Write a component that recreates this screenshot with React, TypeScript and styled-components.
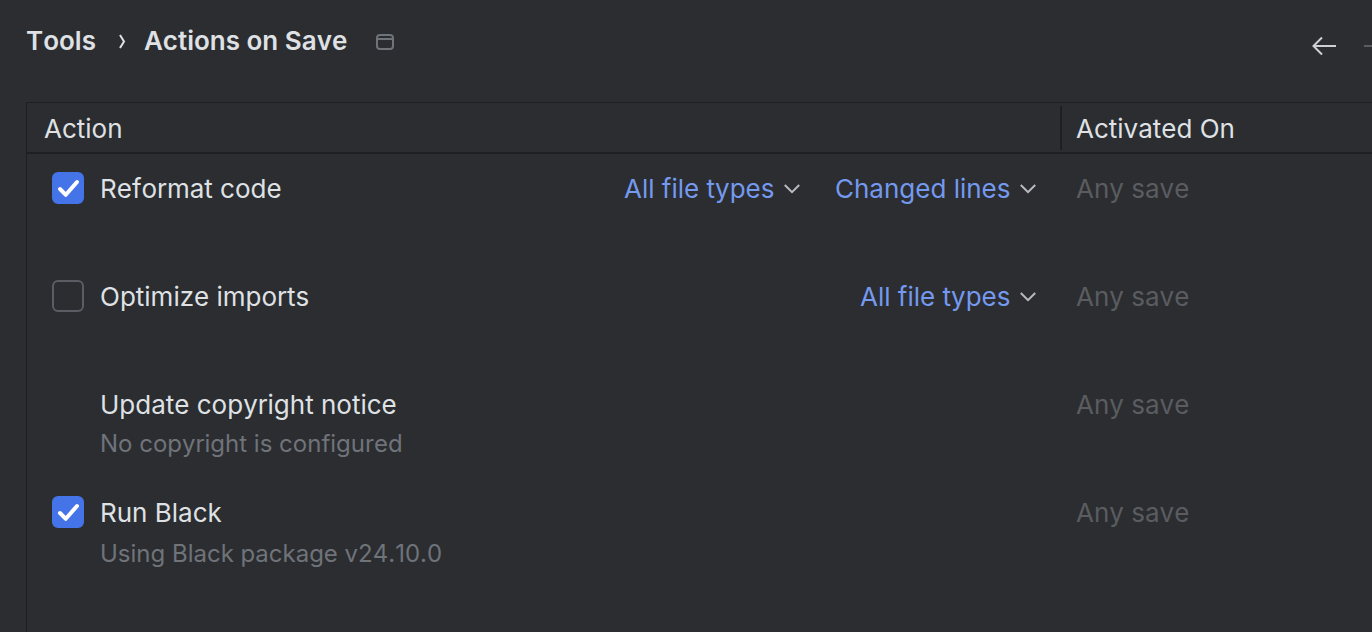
import React, { useState } from "react";
import styled, { createGlobalStyle } from "styled-components";

const color = {
  background: "#2b2d30",
  line: "#1e1f22",
  text: "#dfe1e5",
  muted: "#6f737a",
  disabled: "#5a5c60",
  link: "#7499ee",
  accent: "#4573e8",
};

const GlobalStyle = createGlobalStyle`
  *, *::before, *::after { box-sizing: border-box; }
  body {
    margin: 0;
    overflow-x: hidden;
    background: ${color.background};
    color: ${color.text};
    font: 400 26px/34px Inter, sans-serif;
    font-kerning: none;
  }
`;

const Page = styled.main`
  display: flex;
  flex-direction: column;
  min-height: 100vh;
  padding-left: 26px;
`;

const Header = styled.header`
  display: flex;
  align-items: flex-start;
  justify-content: space-between;
  padding: 24px 0 44px;
`;

const Breadcrumb = styled.nav`
  display: flex;
  align-items: center;
  height: 34px;
  font-weight: 600;
`;

const Crumb = styled.a`
  color: inherit;
  text-decoration: none;
`;

const Title = styled.h1`
  margin: 0;
  font: inherit;
`;

const Separator = styled.svg`
  width: 8px;
  height: 16px;
  margin: 0 18px 0 22px;
`;

const IconButton = styled.button<{ $dim?: boolean }>`
  display: flex;
  padding: 0;
  border: 0;
  background: none;
  color: ${(p) => (p.$dim ? color.disabled : "#ced0d6")};
`;

const ScopeIcon = styled.svg`
  width: 20px;
  height: 18px;
  margin: 2px 0 0 28px;
  color: ${color.muted};
`;

const History = styled.div`
  display: flex;
  gap: 28px;
  margin: 10px -16px 0 0;
`;

const Panel = styled.section`
  flex: 1;
  border-top: 1px solid ${color.line};
  border-left: 1px solid ${color.line};
`;

const Table = styled.table`
  width: 100%;
  table-layout: fixed;
  border-collapse: separate;
  border-spacing: 0;
`;

const ActionHead = styled.th`
  height: 51px;
  padding: 3px 0 0 17px;
  border-bottom: 2px solid ${color.line};
  font-weight: 400;
  text-align: left;
`;

const ActivationHead = styled(ActionHead)`
  width: 312px;
  padding: 3px 0 2px;
`;

const HeadDivider = styled.div`
  padding: 6px 0 4px 14px;
  border-left: 2px solid ${color.line};
`;

const Cell = styled.td`
  height: 108px;
  padding: 18px 0 0 25px;
  vertical-align: top;
`;

const ActivationCell = styled(Cell)`
  padding-left: 16px;
  color: ${color.disabled};
`;

const Row = styled.div`
  display: flex;
  align-items: flex-start;
  justify-content: space-between;
  padding-right: 24px;
`;

const Label = styled.label`
  display: flex;
  gap: 16px;
`;

const Indented = styled.div`
  padding-left: 48px;
`;

const Note = styled.div<{ $spaced?: boolean }>`
  padding: ${(p) => (p.$spaced ? "8px" : "6px")} 0 0 48px;
  color: ${color.muted};
  font-size: 24px;
  line-height: 32px;
`;

const Tick = styled.span`
  display: grid;
  width: 32px;
  height: 32px;

  > * { grid-area: 1 / 1; }
  input:not(:checked) + svg { visibility: hidden; }
`;

const Box = styled.input`
  width: 32px;
  height: 32px;
  margin: 0;
  appearance: none;
  border: 2px solid #5a5d63;
  border-radius: 6px;

  &:checked {
    border-color: ${color.accent};
    background: ${color.accent};
  }
`;

const Overlay = styled.svg`
  pointer-events: none;
`;

const Options = styled.div`
  display: flex;
  gap: 35px;
`;

const Dropdown = styled.span`
  display: grid;
  align-items: center;

  > * { grid-area: 1 / 1; }
  > svg { justify-self: end; }
`;

const Select = styled.select`
  height: 34px;
  padding: 0 25px 0 0;
  appearance: none;
  border: 0;
  background: none;
  color: ${color.link};
  font: inherit;
`;

function Checkbox({ label, initial }: { label: string; initial: boolean }) {
  const [checked, setChecked] = useState(initial);
  return (
    <Label>
      <Tick>
        <Box type="checkbox" checked={checked} onChange={(e) => setChecked(e.target.checked)} />
        <Overlay width="32" height="32" viewBox="0 0 32 32" fill="none">
          <path d="M8 17L13.8 22.8L25 10" stroke="#fff" strokeWidth="4" strokeLinecap="round" strokeLinejoin="round" />
        </Overlay>
      </Tick>
      {label}
    </Label>
  );
}

function Picker({ label, value }: { label: string; value: string }) {
  return (
    <Dropdown>
      <Select aria-label={label} defaultValue={value}>
        <option>{value}</option>
      </Select>
      <Overlay width="16" height="10" viewBox="0 0 16 10" fill="none">
        <path d="M0.8 1L8 8.2L15.2 1" stroke="#b9bbc1" strokeWidth="2" />
      </Overlay>
    </Dropdown>
  );
}

type Action = {
  name: string;
  checked?: boolean;
  note?: string;
  pickers: { label: string; value: string }[];
};

const fileTypes = { label: "File types", value: "All file types" };

const actions: Action[] = [
  {
    name: "Reformat code",
    checked: true,
    pickers: [fileTypes, { label: "Scope", value: "Changed lines" }],
  },
  { name: "Optimize imports", checked: false, pickers: [fileTypes] },
  { name: "Update copyright notice", note: "No copyright is configured", pickers: [] },
  { name: "Run Black", checked: true, note: "Using Black package v24.10.0", pickers: [] },
];

export default function App() {
  return (
    <>
      <GlobalStyle />
      <Page>
        <Header>
          <Breadcrumb aria-label="Breadcrumb">
            <Crumb href="#tools">Tools</Crumb>
            <Separator viewBox="0 0 8 16" fill="none" aria-hidden>
              <path d="M2 2L6 8.5L2 15" stroke={color.text} strokeWidth="2" />
            </Separator>
            <Title>Actions on Save</Title>
            <ScopeIcon viewBox="0 0 20 18" fill="none" stroke="currentColor" strokeWidth="2" aria-hidden>
              <rect x="2" y="2" width="16" height="14" rx="3" />
              <path d="M2 6H18" />
            </ScopeIcon>
          </Breadcrumb>
          <History>
            <IconButton aria-label="Back">
              <svg width="24" height="24" viewBox="0 0 24 24" fill="none" stroke="currentColor" strokeWidth="2">
                <path d="M24 12H1.5M10 3.5L1.5 12L10 20.5" />
              </svg>
            </IconButton>
            <IconButton aria-label="Forward" $dim disabled>
              <svg width="24" height="24" viewBox="0 0 24 24" fill="none" stroke="currentColor" strokeWidth="2">
                <path d="M0 12H22.5M14 3.5L22.5 12L14 20.5" />
              </svg>
            </IconButton>
          </History>
        </Header>
        <Panel>
          <Table>
            <thead>
              <tr>
                <ActionHead scope="col">Action</ActionHead>
                <ActivationHead scope="col">
                  <HeadDivider>Activated On</HeadDivider>
                </ActivationHead>
              </tr>
            </thead>
            <tbody>
              {actions.map((action) => {
                const hasBox = action.checked !== undefined;
                return (
                  <tr key={action.name}>
                    <Cell>
                      <Row>
                        {hasBox ? (
                          <Checkbox label={action.name} initial={!!action.checked} />
                        ) : (
                          <Indented>{action.name}</Indented>
                        )}
                        <Options>
                          {action.pickers.map((p) => (
                            <Picker key={p.label} {...p} />
                          ))}
                        </Options>
                      </Row>
                      {action.note && <Note $spaced={hasBox}>{action.note}</Note>}
                    </Cell>
                    <ActivationCell>Any save</ActivationCell>
                  </tr>
                );
              })}
            </tbody>
          </Table>
        </Panel>
      </Page>
    </>
  );
}
